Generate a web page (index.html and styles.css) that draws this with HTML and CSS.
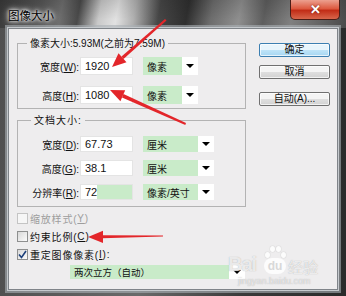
FILE: index.html
```html
<!DOCTYPE html>
<html lang="zh">

<head>
  <meta charset="UTF-8">
  <title>图像大小</title>
  <link rel="stylesheet" href="styles.css">
</head>

<body>
  <div class="win">
    <div class="titlebar">
      <span class="title">图像大小</span>
      <div class="close">✕</div>
    </div>
    <div class="client">
      <div class="main">
        <div class="left">
          <fieldset class="grp g1">
            <legend>像素大小:5.93M(之前为7.59M)</legend>
            <div class="row">
              <label>宽度(<u>W</u>):</label>
              <span class="inp">1920</span>
              <span class="sel"><span class="val">像素</span><span class="arr"></span></span>
            </div>
            <div class="row">
              <label>高度(<u>H</u>):</label>
              <span class="inp">1080</span>
              <span class="sel"><span class="val">像素</span><span class="arr"></span></span>
            </div>
          </fieldset>
          <fieldset class="grp g2">
            <legend>文档大小:</legend>
            <div class="row">
              <label>宽度(<u>D</u>):</label>
              <span class="inp">67.73</span>
              <span class="sel"><span class="val">厘米</span><span class="arr"></span></span>
            </div>
            <div class="row">
              <label>高度(<u>G</u>):</label>
              <span class="inp">38.1</span>
              <span class="sel"><span class="val">厘米</span><span class="arr"></span></span>
            </div>
            <div class="row">
              <label>分辨率(<u>R</u>):</label>
              <span class="inp inp-on">72</span>
              <span class="sel"><span class="val">像素/英寸</span><span class="arr"></span></span>
            </div>
          </fieldset>
        </div>
        <div class="btns">
          <div class="btn ok">确定</div>
          <div class="btn">取消</div>
          <div class="btn auto">自动(A)...</div>
        </div>
      </div>
      <div class="checks">
        <div class="ck off"><span class="cb"></span>缩放样式(<u>Y</u>)</div>
        <div class="ck"><span class="cb"></span>约束比例(<u>C</u>)</div>
        <div class="ck"><span class="cb">
            <svg width="9" height="9" viewBox="0 0 9 9"><path d="M1 4.5 L3.5 7.5 L8 1" fill="none" stroke="#1c3f7a" stroke-width="1.6"/></svg>
          </span>重定图像像素(<u>I</u>):</div>
        <div class="sel resel"><span class="val">两次立方（自动）</span><span class="arr"></span></div>
      </div>
    </div>

    <!-- red arrows drawn over the screenshot -->
    <svg class="arrows" width="346" height="296" viewBox="0 0 346 296">
      <g fill="#e3262a">
        <polygon points="165,19 166.5,20.5 123.5,59 121.5,56.5" />
        <polygon points="112,67 126.5,62.2 118.5,53.2" />
        <polygon points="186,123 185.3,125 122,97.5 123.5,94" />
        <polygon points="110,90 125.2,90.2 120.4,101.2" />
        <polygon points="163,235.5 163,236.5 102,238.3 102,235.3" />
        <polygon points="88,237 103,230.8 103,243" />
      </g>
    </svg>

    <div class="wm">
      <span class="wm-bai">Bai</span>
      <span class="wm-paw"><i></i><i></i><i></i><i></i><b>du</b></span>
      <span class="wm-jy">经验</span>
      <span class="wm-url">jingyan.baidu.com</span>
    </div>
  </div>
</body>

</html>
```

FILE: styles.css
```css
* {
  box-sizing: border-box;
}

body {
  margin: 0;
  font-family: "Liberation Sans", "Noto Sans CJK SC", sans-serif;
  font-size: 10px;
  color: #111;
}

.win {
  width: 346px;
  height: 296px;
  position: relative;
  overflow: hidden;
  background: linear-gradient(90deg, #505050, #6a6a6a 40%, #3a3a3a 70%, #2a2a2a);
}

.titlebar {
  height: 28px;
  display: flex;
  justify-content: space-between;
  align-items: flex-start;
  background:
    linear-gradient(180deg, rgba(0, 0, 0, .12), rgba(0, 0, 0, 0) 70%),
    linear-gradient(100deg, #3a3a3a 0, #575757 12%, #6e6e6e 18%, #4a4a4a 23%, #c9c9c9 29%, #e2e2e2 34%, #b0b0b0 39%, #474747 46%, #2f2f2f 54%, #6d6d6d 61%, #8f8f8f 69%, #5e5e5e 76%, #808080 84%, #4a4a4a 100%);
}

.title {
  margin: 8px 0 0 8px;
  font-family: "Noto Sans CJK SC", sans-serif;
  font-size: 11.5px;
  line-height: 14px;
  color: #000;
  text-shadow: 0 0 3px #fff, 0 0 5px #fff, 0 0 7px #eee;
}

.close {
  width: 50px;
  height: 20px;
  margin-right: 6px;
  border: 1px solid #4b1d16;
  border-top: 0;
  border-radius: 0 0 5px 5px;
  background: linear-gradient(#eca08f, #dd5a40 45%, #c22d17 55%, #d8664b);
  color: #fff;
  font-weight: bold;
  font-size: 13px;
  display: flex;
  align-items: center;
  justify-content: center;
  text-shadow: 0 0 2px #6a1a10;
}

.client {
  margin: 0 8px;
  height: 262px;
  background: #eeedee;
  border: 1px solid #7f8489;
  box-shadow: 0 0 0 1px #c5c9cd, 0 0 0 3px rgba(170, 176, 182, .6);
  padding: 0 7px 0 8px;
}

.main {
  display: flex;
}

.left {
  width: 229px;
}

.grp {
  margin: 0;
  border: 1px solid #b3b3b3;
  padding: 0;
}

.grp legend {
  font-size: 10px;
  line-height: 13px;
  padding: 0 3px;
}

.g1 {
  margin-top: 8px;
  padding: 7px 0 4px;
}

.g1 legend {
  margin-left: 9px;
}

.g2 {
  margin-top: 5px;
  padding: 9px 0 6px;
}

.g2 legend {
  margin-left: 13px;
  letter-spacing: 1px;
}

.row {
  display: flex;
  align-items: center;
}

.g1 .row {
  height: 18px;
}

.g1 .row+.row {
  margin-top: 11px;
}

.g2 .row {
  height: 16px;
}

.g2 .row+.row {
  margin-top: 8px;
}

label {
  flex: none;
  width: 61px;
  text-align: right;
}

.inp {
  flex: none;
  width: 53px;
  height: 100%;
  margin-left: 1px;
  padding-left: 4px;
  background: #fff;
  border: 1px solid #e4e4e4;
  font-size: 11px;
  display: flex;
  align-items: center;
}

.inp-on {
  background: linear-gradient(90deg, #fff 16px, #c9ebc9 16px);
}

.sel {
  flex: none;
  display: flex;
  height: 100%;
  margin-left: 10px;
  background: #fff;
}

.g1 .sel {
  width: 55px;
}

.g2 .sel {
  width: 71px;
}

.sel .val {
  flex: 1;
  background: #c9ebc9;
  padding-left: 4px;
  display: flex;
  align-items: center;
  white-space: nowrap;
  overflow: hidden;
}

.sel .arr {
  width: 16px;
  display: flex;
  align-items: center;
  justify-content: center;
}

.sel .arr::after {
  content: "";
  border-left: 4px solid transparent;
  border-right: 4px solid transparent;
  border-top: 4px solid #000;
}

.btns {
  width: 71px;
  margin: 14px 0 0 13px;
  display: flex;
  flex-direction: column;
}

.btn {
  height: 14px;
  font-size: 10px;
  line-height: 12px;
  text-align: center;
  border: 1px solid #707070;
  border-radius: 2px;
  background: linear-gradient(#f4f4f4 50%, #dfdfdf 50%, #d2d2d2);
  box-shadow: inset 0 0 0 1px rgba(255, 255, 255, .7);
}

.btn+.btn {
  margin-top: 8px;
}

.btn.auto {
  margin-top: 13px;
}

.btn.ok {
  border-color: #3c7fb1;
  background: linear-gradient(#e8f5fc 50%, #bfe4f8 50%, #a6d6f2);
}

.checks {
  margin-top: 2px;
}

.ck {
  height: 18px;
  display: flex;
  align-items: center;
  letter-spacing: .8px;
}

.cb {
  width: 11px;
  height: 11px;
  margin-right: 2px;
  border: 1px solid #8e8f8f;
  background: linear-gradient(135deg, #d8d8d8, #fbfbfb);
  display: flex;
  align-items: center;
  justify-content: center;
}

.ck.off {
  color: #9d9d9d;
}

.ck.off .cb {
  border-color: #c4c4c4;
  background: #f6f6f6;
}

.resel {
  width: 175px;
  height: 14px;
  margin: 2px 0 0 53px;
}

.resel .val {
  font-size: 9.5px;
}

.arrows {
  position: absolute;
  left: 0;
  top: 0;
  pointer-events: none;
}

.wm {
  position: absolute;
  left: 226px;
  top: 244px;
  width: 100px;
  height: 44px;
  color: rgba(255, 255, 255, .75);
  text-shadow: 0 0 1px rgba(120, 120, 120, .6);
  pointer-events: none;
}

.wm-bai {
  position: absolute;
  left: 2px;
  top: 9px;
  font: bold 20px "Liberation Sans", sans-serif;
  letter-spacing: -1px;
}

.wm-paw {
  position: absolute;
  left: 38px;
  top: 0;
  width: 22px;
  height: 30px;
}

.wm-paw i {
  position: absolute;
  width: 5px;
  height: 6px;
  border-radius: 50%;
  background: rgba(255, 255, 255, .8);
  box-shadow: 0 0 1px rgba(120, 120, 120, .6);
}

.wm-paw i:nth-child(1) { left: 1px; top: 8px; }
.wm-paw i:nth-child(2) { left: 6px; top: 2px; }
.wm-paw i:nth-child(3) { left: 12px; top: 2px; }
.wm-paw i:nth-child(4) { left: 17px; top: 8px; }

.wm-paw b {
  position: absolute;
  left: 0;
  top: 14px;
  width: 22px;
  height: 16px;
  border-radius: 8px;
  background: rgba(255, 255, 255, .8);
  color: #d8d8d8;
  font: bold 12px/16px "Liberation Sans", sans-serif;
  text-align: center;
  text-shadow: none;
}

.wm-jy {
  position: absolute;
  left: 62px;
  top: 12px;
  font: 15px "Noto Sans CJK SC", sans-serif;
}

.wm-url {
  position: absolute;
  left: 12px;
  top: 32px;
  font: 9px "Liberation Sans", sans-serif;
  color: rgba(255, 255, 255, .6);
}
```
